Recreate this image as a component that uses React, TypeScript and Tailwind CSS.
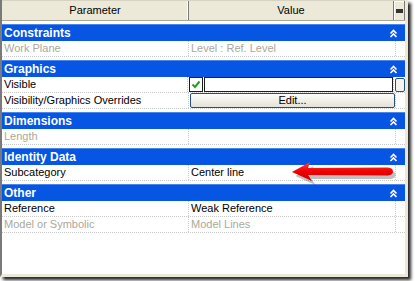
import React from 'react';

type Row = { name: string; value?: string; disabled?: boolean; kind?: 'check' | 'edit' };
type Section = { title: string; rows: Row[] };

const sections: Section[] = [
  { title: 'Constraints', rows: [{ name: 'Work Plane', value: 'Level : Ref. Level', disabled: true }] },
  {
    title: 'Graphics',
    rows: [
      { name: 'Visible', kind: 'check' },
      { name: 'Visibility/Graphics Overrides', kind: 'edit' },
    ],
  },
  { title: 'Dimensions', rows: [{ name: 'Length', disabled: true }] },
  { title: 'Identity Data', rows: [{ name: 'Subcategory', value: 'Center line' }] },
  {
    title: 'Other',
    rows: [
      { name: 'Reference', value: 'Weak Reference' },
      { name: 'Model or Symbolic', value: 'Model Lines', disabled: true },
    ],
  },
];

function Chevrons() {
  return (
    <svg width="9" height="9" viewBox="0 0 9 9" className="mr-[7px]">
      <path d="M1.5 4.5 L4.5 1.5 L7.5 4.5" stroke="white" strokeWidth="1.6" fill="none" />
      <path d="M1.5 8 L4.5 5 L7.5 8" stroke="white" strokeWidth="1.6" fill="none" />
    </svg>
  );
}

function ValueCell({ row }: { row: Row }) {
  if (row.kind === 'check') {
    return (
      <div className="flex items-center w-full h-full pl-[1px] gap-[1px]">
        <div className="w-[14px] h-[15px] border border-[#1c1c1c] bg-white flex items-center justify-center">
          <svg width="10" height="9" viewBox="0 0 10 9">
            <path d="M1.5 4.5 L4 7 L8.5 1.5" stroke="#21a121" strokeWidth="2" fill="none" />
          </svg>
        </div>
        <div className="flex-1 h-[15px] border border-[#1c1c1c] bg-white" />
      </div>
    );
  }
  if (row.kind === 'edit') {
    return (
      <div className="flex items-center w-full h-full pl-[1px]">
        <div className="flex-1 h-[15px] rounded-[2px] border border-[#274f7c] bg-gradient-to-b from-[#fdfdfb] to-[#e4e2d8] flex items-center justify-center text-[11px] text-black leading-none">
          Edit...
        </div>
      </div>
    );
  }
  return (
    <span className={`pl-[2px] text-[11px] leading-none ${row.disabled ? 'text-[#aca899]' : 'text-black'}`}>
      {row.value}
    </span>
  );
}

export default function App() {
  return (
    <div className="relative w-[415px] h-[281px] bg-white overflow-hidden" style={{ fontFamily: '"Liberation Sans", Arial, sans-serif' }}>
      <div className="w-[408px] h-[277px] bg-white border-l-2 border-[#7a7a7a] border-r-[3px] border-r-[#ece9d8] border-b-[3px] border-b-[#ece9d8] shadow-[3px_3px_3px_rgba(0,0,0,0.85)] flex flex-col">
        {/* header */}
        <div className="flex h-[21px] bg-[#ece9d8] border-b border-[#aca899] border-t border-t-[#d6d3c4]">
          <div className="w-[187px] flex items-center justify-center text-[11px] text-black border-r border-[#7a7a7a] shadow-[inset_-1px_0_0_#fff]">
            Parameter
          </div>
          <div className="flex-1 flex items-center justify-center text-[11px] text-black border-r border-[#7a7a7a]">
            Value
          </div>
          <div className="w-[11px] flex items-center justify-center border-r border-[#7a7a7a] shadow-[inset_1px_1px_0_#fff]">
            <div className="w-[7px] h-[4px] border-y-2 border-[#333]" />
          </div>
        </div>
        <div className="h-[3px]" />
        {sections.map((s, i) => (
          <div key={s.title} className={i > 0 ? 'mt-[3px]' : ''}>
            <div className="h-[17px] bg-[#0655e3] flex items-center justify-between pl-[2px] border-t border-[#4a86ee]">
              <span className="text-white font-bold text-[12px] leading-none">{s.title}</span>
              <Chevrons />
            </div>
            {s.rows.map((r) => (
              <div key={r.name} className="h-[16px] flex border-b border-dotted border-[#c8c8c8]">
                <div className={`w-[187px] flex items-center pl-[2px] text-[11px] leading-none border-r border-dotted border-[#c8c8c8] ${r.disabled ? 'text-[#aca899]' : 'text-black'}`}>
                  {r.name}
                </div>
                <div className="w-[206px] flex items-center">
                  <ValueCell row={r} />
                </div>
                <div className="flex-1 flex items-center border-l border-dotted border-[#c8c8c8]">
                  {r.kind === 'check' && (
                    <div className="ml-[1px] w-[10px] h-[14px] rounded-[2px] border border-[#274f7c] bg-[#f4f3ee]" />
                  )}
                </div>
              </div>
            ))}
          </div>
        ))}
      </div>
      {/* red arrow annotation */}
      <svg className="absolute left-[288px] top-[160px]" width="110" height="26" viewBox="0 0 110 26">
        <defs>
          <linearGradient id="rg" x1="0" y1="0" x2="0" y2="1">
            <stop offset="0" stopColor="#ff4040" />
            <stop offset="0.5" stopColor="#f00000" />
            <stop offset="1" stopColor="#c80000" />
          </linearGradient>
        </defs>
        <path d="M6 14 L24 4 L22 10 L101 9 Q106 9.5 106 13 Q106 16.5 101 17 L22 17 L26 23 Z" fill="rgba(0,0,0,0.25)" transform="translate(1.5,2)" />
        <path d="M4 12 L22 2 L20 8 L100 7.5 Q105 8 105 11.5 Q105 15 100 15.5 L20 15 L24 21 Z" fill="url(#rg)" />
      </svg>
    </div>
  );
}
